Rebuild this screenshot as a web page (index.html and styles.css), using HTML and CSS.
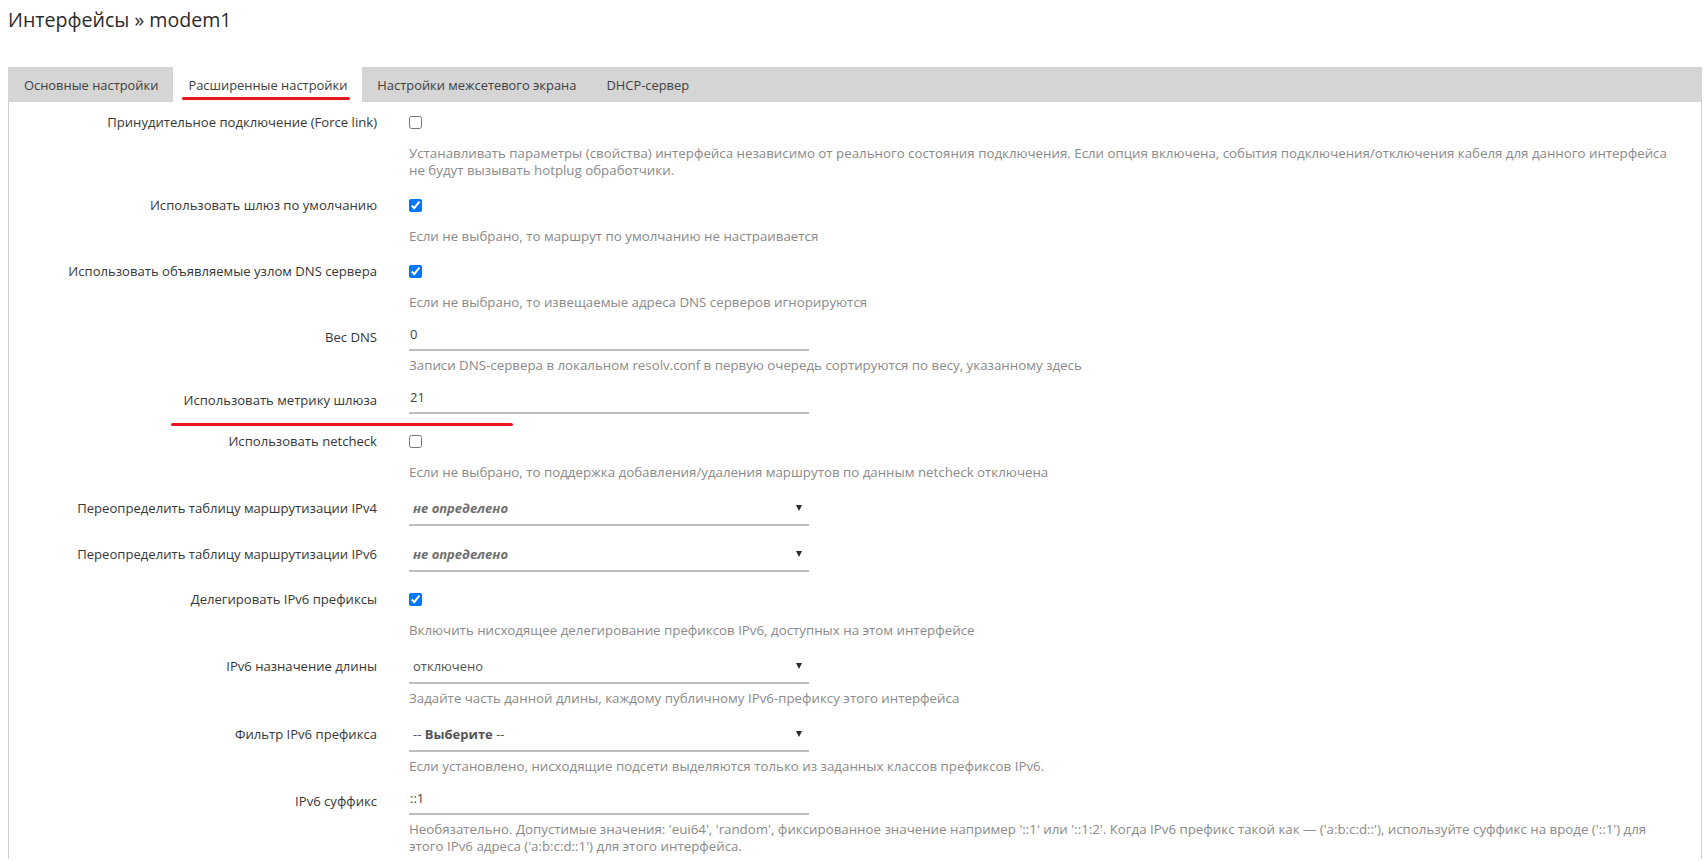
FILE: index.html
```html
<!DOCTYPE html>
<html lang="ru">
<head>
<meta charset="utf-8">
<title>Интерфейсы » modem1</title>
<link rel="stylesheet" href="styles.css">
</head>
<body>
<div class="page">
  <h2 class="title">Интерфейсы » modem1</h2>

  <div class="tabs">
    <div class="tab">Основные настройки</div>
    <div class="tab tab-active">Расширенные настройки<span class="mark mark-tab"></span></div>
    <div class="tab">Настройки межсетевого экрана</div>
    <div class="tab">DHCP-сервер</div>
  </div>

  <div class="panel">
    <span class="mark mark-metric"></span>

    <div class="row row-cb row-desc">
      <div class="label">Принудительное подключение (Force link)</div>
      <div class="field">
        <div class="control"><input class="cb" type="checkbox"></div>
        <div class="desc">Устанавливать параметры (свойства) интерфейса независимо от реального состояния подключения. Если опция включена, события подключения/отключения кабеля для данного интерфейса не будут вызывать hotplug обработчики.</div>
      </div>
    </div>

    <div class="row row-cb row-desc">
      <div class="label">Использовать шлюз по умолчанию</div>
      <div class="field">
        <div class="control"><input class="cb" type="checkbox" checked></div>
        <div class="desc">Если не выбрано, то маршрут по умолчанию не настраивается</div>
      </div>
    </div>

    <div class="row row-cb row-desc">
      <div class="label">Использовать объявляемые узлом DNS сервера</div>
      <div class="field">
        <div class="control"><input class="cb" type="checkbox" checked></div>
        <div class="desc">Если не выбрано, то извещаемые адреса DNS серверов игнорируются</div>
      </div>
    </div>

    <div class="row row-input row-desc">
      <div class="label">Вес DNS</div>
      <div class="field">
        <div class="control text-input">0</div>
        <div class="desc">Записи DNS-сервера в локальном resolv.conf в первую очередь сортируются по весу, указанному здесь</div>
      </div>
    </div>

    <div class="row row-input">
      <div class="label">Использовать метрику шлюза</div>
      <div class="field">
        <div class="control text-input">21</div>
      </div>
    </div>

    <div class="row row-cb row-desc">
      <div class="label">Использовать netcheck</div>
      <div class="field">
        <div class="control"><input class="cb" type="checkbox"></div>
        <div class="desc">Если не выбрано, то поддержка добавления/удаления маршрутов по данным netcheck отключена</div>
      </div>
    </div>

    <div class="row row-select">
      <div class="label">Переопределить таблицу маршрутизации IPv4</div>
      <div class="field">
        <div class="control select"><span class="val val-unset">не определено</span><span class="arrow"></span></div>
      </div>
    </div>

    <div class="row row-select">
      <div class="label">Переопределить таблицу маршрутизации IPv6</div>
      <div class="field">
        <div class="control select"><span class="val val-unset">не определено</span><span class="arrow"></span></div>
      </div>
    </div>

    <div class="row row-cb row-desc">
      <div class="label">Делегировать IPv6 префиксы</div>
      <div class="field">
        <div class="control"><input class="cb" type="checkbox" checked></div>
        <div class="desc">Включить нисходящее делегирование префиксов IPv6, доступных на этом интерфейсе</div>
      </div>
    </div>

    <div class="row row-select row-desc">
      <div class="label">IPv6 назначение длины</div>
      <div class="field">
        <div class="control select"><span class="val">отключено</span><span class="arrow"></span></div>
        <div class="desc">Задайте часть данной длины, каждому публичному IPv6-префиксу этого интерфейса</div>
      </div>
    </div>

    <div class="row row-select row-desc">
      <div class="label">Фильтр IPv6 префикса</div>
      <div class="field">
        <div class="control select"><span class="val">-- <b>Выберите</b> --</span><span class="arrow"></span></div>
        <div class="desc">Если установлено, нисходящие подсети выделяются только из заданных классов префиксов IPv6.</div>
      </div>
    </div>

    <div class="row row-input row-desc">
      <div class="label">IPv6 суффикс</div>
      <div class="field">
        <div class="control text-input">::1</div>
        <div class="desc">Необязательно. Допустимые значения: 'eui64', 'random', фиксированное значение например '::1' или '::1:2'. Когда IPv6 префикс такой как — ('a:b:c:d::'), используйте суффикс на вроде ('::1') для этого IPv6 адреса ('a:b:c:d::1') для этого интерфейса.</div>
      </div>
    </div>
  </div>
</div>
</body>
</html>
```
FILE: styles.css
```css
html, body {
  margin: 0;
  padding: 0;
  background: #ffffff;
}

body {
  font-family: "Open Sans", "Noto Sans", sans-serif;
  color: #333333;
}

.page {
  padding: 6px 2px 0 8px;
}

.title {
  margin: 0;
  font-size: 19.6px;
  line-height: 27px;
  font-weight: 400;
  color: #2b2b2b;
}

/* tabs */
.tabs {
  margin-top: 34px;
  display: flex;
  height: 35px;
  padding-left: 1px;
  background: #d5d5d5;
}

.tab {
  position: relative;
  padding: 0 15px;
  font-size: 12.9px;
  line-height: 36px;
  color: #404040;
  white-space: nowrap;
}

.tab-active {
  background: #ffffff;
}

/* hand-drawn red annotation lines */
.mark {
  position: absolute;
  height: 3px;
  background: #e81820;
  border-radius: 2px;
}

.mark-tab {
  left: 9px;
  top: 30px;
  width: 168px;
}

.mark-metric {
  left: 162px;
  top: 321px;
  width: 342px;
}

/* panel */
.panel {
  position: relative;
  border-left: 1px solid #cfcfcf;
  border-right: 1px solid #cfcfcf;
  padding: 3px 0 4px 0;
}

.row {
  --h: 34px;
  display: flex;
  align-items: flex-start;
  margin-bottom: 10px;
}

.row-desc {
  margin-bottom: 9px;
}

.row:last-child {
  margin-bottom: 0;
}

.row-input {
  --h: 31px;
}

.row-select {
  --h: 36px;
}

.label {
  width: 368px;
  flex: none;
  text-align: right;
  font-size: 13.1px;
  line-height: var(--h);
  color: #363636;
  white-space: nowrap;
}

.row-input .label {
  padding-top: 4px;
  line-height: 27px;
}

.field {
  margin-left: 32px;
  width: 1265px;
}

.control {
  height: var(--h);
  display: flex;
  align-items: center;
}

.cb {
  margin: 0;
  width: 13px;
  height: 13px;
}

.text-input,
.select {
  box-sizing: border-box;
  width: 400px;
  border-bottom: 2px solid #bdbdbd;
  font-size: 13px;
  color: #444444;
}

.text-input {
  padding: 0 1px 1px 1px;
}

.select {
  justify-content: space-between;
  padding: 2px 7px 0 4px;
  color: #555555;
}

.val b {
  font-weight: 700;
}

.val-unset {
  font-weight: 700;
  font-style: italic;
  color: #6e6e6e;
}

.arrow {
  width: 0;
  height: 0;
  border-left: 3.5px solid transparent;
  border-right: 3.5px solid transparent;
  border-top: 6px solid #2a2a2a;
}

.desc {
  margin-top: 6px;
  font-size: 13.3px;
  line-height: 17px;
  color: #8a8a8a;
}
```
